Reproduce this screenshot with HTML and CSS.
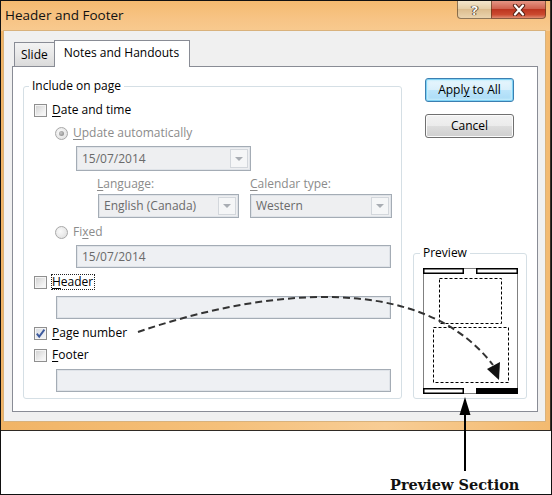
FILE: index.html
```html
<!DOCTYPE html>
<html>
<head>
<meta charset="utf-8">
<title>Header and Footer</title>
<link rel="stylesheet" href="styles.css">
</head>
<body>
<div class="frame">
  <div class="window">
    <div class="titlebar">
      <span class="title">Header and Footer</span>
      <div class="caption-btns">
        <div class="cbtn help">?</div>
        <div class="cbtn close">
          <svg width="16" height="12" viewBox="0 0 16 12">
            <path d="M4 1.5 L12 10.5 M12 1.5 L4 10.5" stroke="#5a2418" stroke-width="4.2" stroke-linecap="round"/>
            <path d="M4 1.5 L12 10.5 M12 1.5 L4 10.5" stroke="#fff" stroke-width="2.2" stroke-linecap="round"/>
          </svg>
        </div>
      </div>
    </div>
    <div class="client">
      <div class="tabs">
        <div class="tab">Slide</div>
        <div class="tab active">Notes and Handouts</div>
      </div>
      <div class="panel">
        <div class="group include">
          <span class="legend">Include on page</span>
          <div class="row r-date"><span class="check"></span><span class="lbl"><u>D</u>ate and time</span></div>
          <div class="row r-upd"><span class="radio on"></span><span class="lbl dis"><u>U</u>pdate automatically</span></div>
          <div class="combo c-date"><span class="val">15/07/2014</span><span class="dd"></span></div>
          <div class="row r-langlbl"><span class="sub lang dis"><u>L</u>anguage:</span><span class="sub dis"><u>C</u>alendar type:</span></div>
          <div class="row r-combos">
            <div class="combo c-lang"><span class="val">English (Canada)</span><span class="dd"></span></div>
            <div class="combo c-cal"><span class="val">Western</span><span class="dd"></span></div>
          </div>
          <div class="row r-fixed"><span class="radio"></span><span class="lbl dis">Fi<u>x</u>ed</span></div>
          <div class="tbox t-fixed"><span class="val">15/07/2014</span></div>
          <div class="row r-header"><span class="check"></span><span class="lbl focus"><u>H</u>eader</span></div>
          <div class="tbox t-wide t-header"></div>
          <div class="row r-page"><span class="check checked"><svg width="11" height="11" viewBox="0 0 11 11"><path d="M1.8 5.6 L4.2 8.6 L9.4 1.6" fill="none" stroke="#3d5a9e" stroke-width="1.9"/></svg></span><span class="lbl"><u>P</u>age number</span></div>
          <div class="row r-footer"><span class="check"></span><span class="lbl"><u>F</u>ooter</span></div>
          <div class="tbox t-wide t-footer"></div>
        </div>
        <div class="side">
          <div class="btn default"><span>Appl<u>y</u> to All</span></div>
          <div class="btn cancel"><span>Cancel</span></div>
          <div class="group preview">
            <span class="legend">Preview</span>
            <svg class="pv" width="95" height="126" viewBox="0 0 95 126">
              <rect x="0.5" y="0.5" width="94" height="125" fill="#fff" stroke="#808080"/>
              <rect x="0.75" y="0.75" width="39.5" height="4.5" fill="#fff" stroke="#000" stroke-width="1.5"/>
              <rect x="53.75" y="0.75" width="40.5" height="4.5" fill="#fff" stroke="#000" stroke-width="1.5"/>
              <rect x="16.5" y="10.5" width="62" height="45" fill="none" stroke="#000" stroke-dasharray="3 2"/>
              <rect x="10.5" y="59.5" width="75" height="55" fill="none" stroke="#000" stroke-dasharray="3 2"/>
              <rect x="0.75" y="120.75" width="39.5" height="4.5" fill="#fff" stroke="#000" stroke-width="1.5"/>
              <rect x="53" y="120" width="42" height="6" fill="#000"/>
            </svg>
          </div>
        </div>
      </div>
    </div>
  </div>
  <div class="annot"><span class="caption">Preview Section</span></div>
  <svg class="overlay" width="552" height="495" viewBox="0 0 552 495">
    <path d="M138 332 C 260 290 420 270 493 365" fill="none" stroke="#333" stroke-width="2" stroke-dasharray="7 4"/>
    <polygon points="487,369 500,362 499,380" fill="#111"/>
    <line x1="465" y1="410" x2="465" y2="471" stroke="#000" stroke-width="2"/>
    <polygon points="465,397 459.5,415 470.5,415" fill="#000"/>
  </svg>
</div>
</body>
</html>
```

FILE: styles.css
```css
* { box-sizing: border-box; }
html, body { margin: 0; padding: 0; background: #fff; }
body {
  font-family: "Open Sans", "Noto Sans", sans-serif;
  font-size: 12px;
  color: #000;
}
u { text-decoration: underline; text-underline-offset: 2px; }

.frame {
  position: relative;
  width: 552px;
  height: 495px;
  border: 1px solid #111;
  display: flex;
  flex-direction: column;
  overflow: hidden;
  background: #fff;
}

.window {
  height: 430px;
  flex: none;
  display: flex;
  flex-direction: column;
  background: linear-gradient(to right, #f1b466, #f5c07a 40%, #f8cd95 70%, #f3ba70);
  border-bottom: 1px solid #2f2a24;
  border-right: 1px solid #3a3128;
}

.titlebar {
  height: 30px;
  flex: none;
  display: flex;
  justify-content: space-between;
  align-items: flex-start;
  padding-left: 4px;
  padding-right: 4px;
  background: linear-gradient(to bottom, #f4ba70, #f7c485 60%, #f8ca8f);
}
.title {
  font-size: 13.5px;
  line-height: 16px;
  margin-top: 6px;
  color: #111;
}
.caption-btns { display: flex; }
.cbtn {
  height: 18px;
  display: flex;
  align-items: center;
  justify-content: center;
  border: 1px solid rgba(90, 60, 30, 0.65);
  border-top: none;
}
.help {
  width: 34px;
  border-right: none;
  border-bottom-left-radius: 4px;
  background: linear-gradient(to bottom, #f4e6cc, #e6cfa8 45%, #dcbd8f 50%, #ead3ae);
  color: #fff;
  font-weight: bold;
  font-size: 13px;
  line-height: 16px;
  text-shadow: 0 0 1px #4b3c2a, 0 0 1px #4b3c2a, 1px 0 0 #6b5a45, -1px 0 0 #6b5a45;
}
.close {
  width: 55px;
  border-bottom-right-radius: 4px;
  background: linear-gradient(to bottom, #e59584, #d0624f 45%, #bd3520 50%, #cb4a30 80%, #e08b70);
}

.client {
  height: 390px;
  margin-left: 3px;
  margin-right: 5px;
  padding: 9px 7px 9px 8px;
  background: #f0f0f0;
  box-shadow: 0 0 0 1px #d9b27c;
}

.tabs {
  height: 26px;
  display: flex;
  align-items: flex-end;
  padding-left: 2px;
}
.tab {
  height: 24px;
  padding: 0 6px 0 6px;
  line-height: 24px;
  border: 1px solid #898c95;
  border-bottom: none;
  border-right: none;
  background: linear-gradient(to bottom, #f3f3f3, #e8e8e8 50%, #dadada);
}
.tab.active {
  position: relative;
  z-index: 1;
  height: 27px;
  margin-bottom: -1px;
  width: 136px;
  padding-left: 9px;
  line-height: 24px;
  border-right: 1px solid #898c95;
  background: #fff;
}

.panel {
  height: 346px;
  border: 1px solid #898c95;
  background: #fff;
  display: flex;
  align-items: flex-start;
}

.group {
  border: 1px solid #d5dfe5;
  border-radius: 3px;
}
.legend {
  display: block;
  width: fit-content;
  height: 16px;
  line-height: 16px;
  margin-top: -9px;
  padding: 0 3px;
  background: #fff;
}
.include {
  margin-left: 10px;
  margin-top: 19px;
  width: 379px;
  height: 313px;
}
.include .legend { margin-left: 5px; }

.row {
  display: flex;
  align-items: center;
  height: 16px;
  line-height: 16px;
}
.lbl { margin-left: 5px; white-space: nowrap; }
.dis { color: #8b8b8b; }

.check {
  width: 13px;
  height: 13px;
  flex: none;
  border: 1px solid #8f8f8f;
  background: linear-gradient(135deg, #cfcfcf, #f2f2f2 70%, #fafafa);
  box-shadow: inset 0 0 0 1px #f5f5f5;
  display: flex;
  align-items: center;
  justify-content: center;
}
.check.checked {
  background: linear-gradient(135deg, #d8dbe0, #f6f7f9);
}
.radio {
  width: 13px;
  height: 13px;
  flex: none;
  border-radius: 50%;
  border: 1px solid #a8a8a8;
  background: radial-gradient(circle at 40% 40%, #fafafa, #dcdcdc);
  display: flex;
  align-items: center;
  justify-content: center;
}
.radio.on::after {
  content: "";
  width: 5px;
  height: 5px;
  border-radius: 50%;
  background: radial-gradient(circle at 40% 40%, #c8c8c8, #7d7d7d);
}

.r-date, .r-header, .r-page, .r-footer { margin-left: 10px; }
.r-upd, .r-fixed { margin-left: 31px; }

.r-date { margin-top: 8px; }
.r-upd { margin-top: 7px; }
.c-date { margin-top: 5px; margin-left: 52px; width: 175px; height: 25px; }
.r-langlbl { margin-top: 5px; margin-left: 73px; }
.sub { white-space: nowrap; }
.sub.lang { width: 153px; }
.r-combos { margin-top: 2px; height: 24px; }
.c-lang { margin-left: 74px; width: 141px; height: 24px; }
.c-cal { margin-left: 11px; width: 142px; height: 24px; }
.r-fixed { margin-top: 6px; }
.t-fixed { margin-top: 5px; margin-left: 52px; width: 315px; }
.r-header { margin-top: 6px; }
.t-header { margin-top: 6px; }
.r-page { margin-top: 6px; }
.r-footer { margin-top: 6px; }
.t-footer { margin-top: 6px; }
.t-wide { margin-left: 32px; width: 335px; }

.focus {
  border: 1px dotted #222;
  margin-left: 4px;
  padding: 0 1px 0 0;
  height: 16px;
  line-height: 14px;
}

.combo, .tbox {
  display: flex;
  align-items: center;
  border: 1px solid #a4acb5;
  box-shadow: inset 0 0 0 1px #dfe3e8;
  background: #eeeff1;
  color: #6a6a6a;
}
.tbox { height: 23px; background: #eef0f3; }
.val { padding-left: 5px; white-space: nowrap; }
.dd {
  margin-left: auto;
  margin-right: 2px;
  width: 18px;
  height: calc(100% - 4px);
  border: 1px solid #d3d7dc;
  background: #f5f6f7;
  display: flex;
  align-items: center;
  justify-content: center;
}
.dd::after {
  content: "";
  width: 0;
  height: 0;
  border-left: 4px solid transparent;
  border-right: 4px solid transparent;
  border-top: 4px solid #a9adb3;
}

.side {
  margin-left: 11px;
  width: 114px;
  display: flex;
  flex-direction: column;
}
.btn {
  margin-left: 12px;
  width: 89px;
  height: 24px;
  border-radius: 3px;
  display: flex;
  align-items: center;
  justify-content: center;
  line-height: 16px;
  white-space: nowrap;
}
.btn.default {
  margin-top: 11px;
  border: 1px solid #3c7fb1;
  background: linear-gradient(to bottom, #e9f6fd, #d8effb 50%, #bde5fb 50%, #a9dbf6);
  box-shadow: inset 0 0 0 1px #7fd3f5, inset 0 0 2px 2px #c8eefc;
}
.btn.cancel {
  margin-top: 12px;
  border: 1px solid #707070;
  background: linear-gradient(to bottom, #f2f2f2, #ebebeb 50%, #dddddd 50%, #cfcfcf);
  box-shadow: inset 0 0 0 1px #fbfbfb;
}
.preview {
  margin-top: 115px;
  height: 146px;
}
.preview .legend { margin-left: 6px; }
.pv { display: block; margin-left: 9px; margin-top: 7px; }

.annot {
  flex: 1;
  padding-top: 46px;
  padding-left: 389px;
}
.caption {
  font-family: "DejaVu Serif", "Liberation Serif", serif;
  font-weight: bold;
  font-size: 14.5px;
  line-height: 16px;
  color: #111;
  white-space: nowrap;
}

.overlay {
  position: absolute;
  left: -1px;
  top: -1px;
  pointer-events: none;
}
```
